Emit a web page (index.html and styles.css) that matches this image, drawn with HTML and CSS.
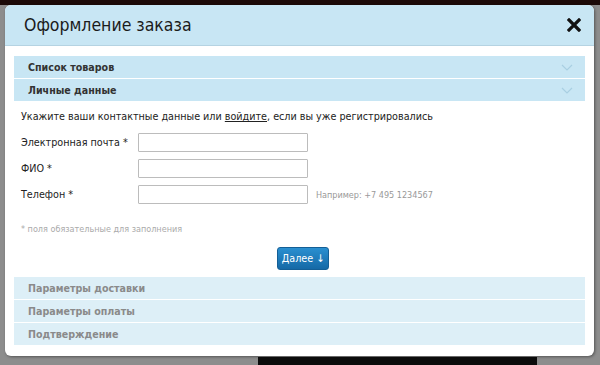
FILE: index.html
```html
<!DOCTYPE html>
<html>

<head>
	<meta charset="UTF-8">
	<title>Оформление заказа</title>
	<link rel="stylesheet" href="styles.css">
</head>

<body>
	<div class="topbar"></div>

	<div class="modal">
		<div class="modal-head">
			<h2>Оформление заказа</h2>
			<svg class="close" width="14" height="14" viewBox="0 0 14 14"><path d="M2 2l10 10M12 2L2 12" stroke="#111" stroke-width="3.2" stroke-linecap="square"/></svg>
		</div>

		<div class="modal-body">
			<div class="step open">
				<span>Список товаров</span>
				<svg class="chev" width="12" height="7" viewBox="0 0 12 7"><path d="M1 1l5 5 5-5" fill="none" stroke="#a9cfe2" stroke-width="1.2"/></svg>
			</div>
			<div class="step open">
				<span>Личные данные</span>
				<svg class="chev" width="12" height="7" viewBox="0 0 12 7"><path d="M1 1l5 5 5-5" fill="none" stroke="#a9cfe2" stroke-width="1.2"/></svg>
			</div>

			<div class="form">
				<p class="intro">Укажите ваши контактные данные или <a href="#">войдите</a>, если вы уже регистрировались</p>

				<div class="row">
					<label>Электронная почта *</label>
					<input type="text" class="inputbox">
				</div>
				<div class="row">
					<label>ФИО *</label>
					<input type="text" class="inputbox">
				</div>
				<div class="row">
					<label>Телефон *</label>
					<input type="text" class="inputbox">
					<span class="hint">Например: +7 495 1234567</span>
				</div>

				<p class="note">* поля обязательные для заполнения</p>

				<div class="h-center">
					<button type="button" class="button">Далее &#x2193;</button>
				</div>
			</div>

			<div class="step">Параметры доставки</div>
			<div class="step">Параметры оплаты</div>
			<div class="step">Подтверждение</div>
		</div>
	</div>

	<div class="footbar"></div>
</body>

</html>
```

FILE: styles.css
```css
html {
	height: 100%;
}

body {
	margin: 0;
	height: 100%;
	overflow: hidden;
	background-color: #8d8d8d;
	font-family: "DejaVu Sans Condensed", "DejaVu Sans", sans-serif;
	color: #222;
}

.topbar {
	height: 5px;
	background-color: #1c0a08;
}

.modal {
	width: 589px;
	margin-left: 5px;
	background-color: white;
	border-radius: 6px;
	overflow: hidden;
	box-shadow: 1px 1px 3px rgba(0, 0, 0, 0.4);
}

.modal-head {
	height: 40px;
	background-color: #c8e6f4;
	border-bottom: 1px solid #b5d3e2;
	display: flex;
	align-items: center;
	justify-content: space-between;
	padding: 0 13px 0 19px;
}

.modal-head h2 {
	margin: 0;
	font-size: 17.5px;
	font-weight: normal;
	color: #1b1b1b;
}

.modal-body {
	padding: 10px 9px 10px 9px;
}

.step {
	height: 22px;
	margin-bottom: 1px;
	background-color: #ddeff7;
	color: #8a8a8a;
	font-size: 10.6px;
	font-weight: bold;
	display: flex;
	align-items: center;
	justify-content: space-between;
	padding: 0 12px 0 14px;
}

.step.open {
	background-color: #c8e6f4;
	color: #333;
}

.form {
	padding: 8px 7px 7px 7px;
	font-size: 10.7px;
}

.intro {
	margin: 0 0 10px 0;
}

.intro a {
	color: #222;
}

.row {
	display: flex;
	align-items: center;
	height: 19px;
	margin-bottom: 7px;
}

.row label {
	width: 117px;
}

.inputbox {
	width: 168px;
	height: 17px;
	padding: 0;
	border: 1px solid #bcbcbc;
	border-radius: 1px;
}

.hint {
	margin-left: 8px;
	font-size: 9px;
	color: #999;
}

.note {
	margin: 20px 0 13px 0;
	font-size: 9px;
	color: #aaa;
}

.h-center {
	text-align: center;
}

.button {
	height: 23px;
	margin-left: 7px;
	padding: 0 4px;
	font-family: inherit;
	font-size: 10.7px;
	color: white;
	background: linear-gradient(#2a8fd0, #1569a6);
	border: 1px solid #145f96;
	border-radius: 3px;
}

.footbar {
	width: 279px;
	height: 12px;
	margin: 1px 0 0 258px;
	background-color: #0b0b0b;
}
```
